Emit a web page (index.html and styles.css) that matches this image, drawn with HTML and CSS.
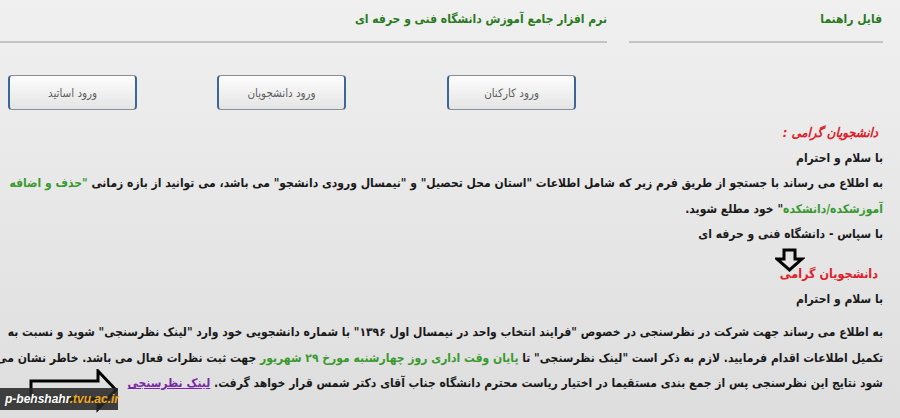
FILE: index.html
```html
<!DOCTYPE html>
<html lang="fa" dir="rtl">
<head>
  <meta charset="UTF-8">
  <title>نرم افزار جامع آموزش دانشگاه فنی و حرفه ای</title>
  <link rel="stylesheet" href="styles.css">
</head>
<body>
  <div class="top-bar">
    <div class="top-item help"><a href="#">فایل راهنما</a></div>
    <div class="top-item title">نرم افزار جامع آموزش دانشگاه فنی و حرفه ای</div>
  </div>

  <div class="login-row">
    <button class="login-btn staff">ورود کارکنان</button>
    <button class="login-btn students">ورود دانشجویان</button>
    <button class="login-btn teachers">ورود اساتید</button>
  </div>

  <div class="notice">
    <div class="line heading">دانشجویان گرامی :</div>
    <div class="line">با سلام و احترام</div>
    <div class="line">به اطلاع می رساند با جستجو از طریق فرم زیر که شامل اطلاعات "استان محل تحصیل" و "نیمسال ورودی دانشجو" می باشد، می توانید از بازه زمانی <span class="green">"حذف و اضافه</span></div>
    <div class="line"><span class="green">آموزشکده/دانشکده</span>" خود مطلع شوید.</div>
    <div class="line">با سپاس - دانشگاه فنی و حرفه ای</div>

    <div class="down-arrow">
      <svg width="30" height="24" viewBox="0 0 30 24">
        <path d="M9 2 H20 V11 H27 L14.5 22 L2 11 H9 Z" fill="none" stroke="#000" stroke-width="3"/>
      </svg>
    </div>

    <div class="line heading plain">دانشجویان گرامی</div>
    <div class="line">با سلام و احترام</div>
    <div class="line wide">به اطلاع می رساند جهت شرکت در نظرسنجی در خصوص "فرایند انتخاب واحد در نیمسال اول ۱۳۹۶" با شماره دانشجویی خود وارد "لینک نظرسنجی" شوید و نسبت به</div>
    <div class="line">تکمیل اطلاعات اقدام فرمایید. لازم به ذکر است "لینک نظرسنجی" تا <span class="green">پایان وقت اداری روز چهارشنبه مورخ ۲۹ شهریور</span> جهت ثبت نظرات فعال می باشد. خاطر نشان می</div>
    <div class="line">شود نتایج این نظرسنجی پس از جمع بندی مستقیما در اختیار ریاست محترم دانشگاه جناب آقای دکتر شمس قرار خواهد گرفت. <a class="survey" href="#">لینک نظرسنجی</a></div>
  </div>

  <svg class="side-arrow" width="92" height="44" viewBox="0 0 92 44">
    <path d="M3 12 H70 V2 L88 21 L70 40 V30 H3 Z" fill="none" stroke="#000" stroke-width="3"/>
  </svg>
  <div class="watermark">p-behshahr<span>.tvu.ac.ir</span></div>
</body>
</html>
```
FILE: styles.css
```css
* {
  box-sizing: border-box;
}

body {
  margin: 0;
  height: 418px;
  overflow: hidden;
  direction: rtl;
  font-family: "DejaVu Sans Condensed", "DejaVu Sans", sans-serif;
  background: linear-gradient(#f0f0f0, #dedede);
  color: #1a1a1a;
  position: relative;
}

.top-bar {
  display: flex;
  gap: 22px;
  padding-right: 17px;
}

.top-item {
  height: 43px;
  padding-top: 12px;
  border-bottom: 2px solid #c3c3c3;
  font-size: 12px;
  font-weight: bold;
  color: #2a7a22;
}

.help {
  width: 254px;
}

.help a {
  color: #2a7a22;
  text-decoration: none;
  margin-right: 1px;
}

.title {
  flex: 1;
}

.login-row {
  display: flex;
  padding: 32px 324px 0 0;
}

.login-btn {
  width: 129px;
  height: 35px;
  border: 1px solid #8a8f96;
  border-left: 2px solid #3d6696;
  border-right: 2px solid #3d6696;
  border-radius: 4px;
  background: linear-gradient(#fdfdfd, #e4e4e4);
  font-family: "DejaVu Sans Condensed", "DejaVu Sans", sans-serif;
  font-size: 11.5px;
  color: #5e5e5e;
  cursor: pointer;
}

.students {
  margin-right: 101px;
}

.teachers {
  margin-right: 80px;
}

.notice {
  padding: 10px 17px 0 0;
  font-size: 12px;
  font-weight: bold;
}

.line {
  height: 25.6px;
  line-height: 25.6px;
  white-space: nowrap;
}

.heading {
  color: #e0202a;
  font-size: 13px;
  font-style: italic;
  padding-right: 5px;
}

.heading.plain {
  font-size: 12.5px;
  font-style: normal;
}

.green {
  color: #3a9a2e;
}

.down-arrow {
  height: 13px;
  padding-right: 78px;
}

.down-arrow svg {
  display: block;
}

.wide {
  margin-top: 8px;
}

.survey {
  color: #7a2aa8;
}

.side-arrow {
  position: absolute;
  left: 28px;
  top: 369px;
}

.watermark {
  position: absolute;
  left: 0;
  top: 388px;
  width: 118px;
  height: 22px;
  padding-left: 5px;
  background: rgba(40, 40, 40, 0.88);
  direction: ltr;
  text-align: left;
  white-space: nowrap;
  font-family: "Liberation Sans", sans-serif;
  font-size: 12px;
  font-weight: bold;
  font-style: italic;
  line-height: 22px;
  color: #fff;
}

.watermark span {
  color: #f0a81c;
}
```
